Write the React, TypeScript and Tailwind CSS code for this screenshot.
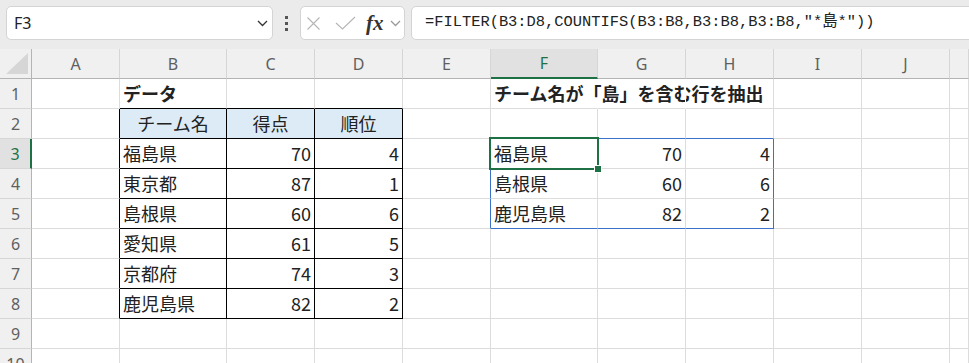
import React from "react";
import clsx from "clsx";

type Cell = { text?: string; align?: "l" | "r" | "c"; bold?: boolean; head?: boolean };

const COLS = ["A", "B", "C", "D", "E", "F", "G", "H", "I", "J", ""];
const ROWS = [1, 2, 3, 4, 5, 6, 7, 8, 9, 10];

const teams: [string, number, number][] = [
  ["福島県", 70, 4],
  ["東京都", 87, 1],
  ["島根県", 60, 6],
  ["愛知県", 61, 5],
  ["京都府", 74, 3],
  ["鹿児島県", 82, 2],
];

// result of =FILTER(...) spilled into F3:H5
const picked = teams.filter(([name]) => name.includes("島"));

const cells: Record<string, Cell> = {
  B1: { text: "データ", bold: true },
  F1: { text: "チーム名が「島」を含む行を抽出", bold: true },
  B2: { text: "チーム名", align: "c", head: true },
  C2: { text: "得点", align: "c", head: true },
  D2: { text: "順位", align: "c", head: true },
};
teams.forEach(([name, score, rank], i) => {
  cells[`B${i + 3}`] = { text: name };
  cells[`C${i + 3}`] = { text: String(score), align: "r" };
  cells[`D${i + 3}`] = { text: String(rank), align: "r" };
});
picked.forEach(([name, score, rank], i) => {
  cells[`F${i + 3}`] = { text: name };
  cells[`G${i + 3}`] = { text: String(score), align: "r" };
  cells[`H${i + 3}`] = { text: String(rank), align: "r" };
});

const inTable = (c: string) => c === "B" || c === "C" || c === "D";
const inSpill = (c: string) => c === "F" || c === "G" || c === "H";

function rightBorder(col: string, row: number) {
  if (row >= 2 && row <= 8 && (col === "A" || inTable(col))) return "border-r-black";
  if (row >= 3 && row <= 5 && (col === "E" || col === "H")) return "border-r-[#3a72c9]";
  if (row === 1 && (col === "F" || col === "G")) return "border-r-white";
  return "border-r-[#dcdcdc]";
}

function bottomBorder(col: string, row: number) {
  if (row <= 8 && inTable(col)) return "border-b-black";
  if ((row === 2 || row === 5) && inSpill(col)) return "border-b-[#3a72c9]";
  return "border-b-[#dcdcdc]";
}

function Chevron({ color }: { color: string }) {
  return (
    <svg width="11" height="7" viewBox="0 0 11 7">
      <polyline points="1,1 5.5,5.5 10,1" fill="none" stroke={color} strokeWidth="1.3" />
    </svg>
  );
}

function FormulaBar() {
  return (
    <div className="flex h-[49px] items-start gap-0 overflow-hidden bg-[#ebebeb] pl-[6px] pt-[6px]">
      {/* name box */}
      <div className="flex h-[34px] w-[267px] shrink-0 items-center justify-between rounded-[5px] border border-[#d4d4d4] bg-white pl-[7px] pr-[4px]">
        <span className="font-['Noto_Sans',sans-serif] text-[16px] text-[#222]">F3</span>
        <Chevron color="#333" />
      </div>
      <div className="flex h-[34px] w-[27px] shrink-0 flex-col items-center justify-center gap-[3px]">
        <span className="size-[3px] bg-[#555]" />
        <span className="size-[3px] bg-[#555]" />
        <span className="size-[3px] bg-[#555]" />
      </div>
      {/* cancel / enter / fx */}
      <div className="flex h-[34px] w-[105px] shrink-0 items-center rounded-[5px] border border-[#d4d4d4] bg-white pl-[6px]">
        <svg width="13" height="13" viewBox="0 0 13 13">
          <path d="M0.5 0.5 L12.5 12.5 M12.5 0.5 L0.5 12.5" stroke="#b5b5b5" strokeWidth="1.1" />
        </svg>
        <svg className="ml-[15px]" width="21" height="14" viewBox="0 0 21 14">
          <polyline points="1,7 7.5,13 20,1" fill="none" stroke="#b5b5b5" strokeWidth="1.1" />
        </svg>
        <span className="ml-[10px] font-['Liberation_Serif',serif] text-[21px] font-bold italic leading-none text-[#333]">
          fx
        </span>
        <span className="ml-[6px] flex">
          <Chevron color="#9a9a9a" />
        </span>
      </div>
      {/* formula */}
      <div className="ml-[6px] flex h-[34px] w-[580px] shrink-0 items-center rounded-[5px] border border-[#d4d4d4] bg-white pl-[13px]">
        <span className="font-['Liberation_Mono','Noto_Sans_CJK_JP',monospace] text-[15.4px] text-[#222]">
          =FILTER(B3:D8,COUNTIFS(B3:B8,B3:B8,B3:B8,"*島*"))
        </span>
      </div>
    </div>
  );
}

function ActiveRing() {
  return (
    <div className="absolute -bottom-[2px] -left-[2px] -right-[2px] -top-[2px] z-10 border-2 border-[#1e7145]">
      <div className="absolute -bottom-[5px] -right-[5px] size-[8px] border border-white bg-[#1e7145]" />
    </div>
  );
}

export default function App() {
  return (
    <div className="h-[363px] w-[969px] overflow-hidden bg-white font-['Noto_Sans_CJK_JP',sans-serif] text-[#222]">
      <FormulaBar />
      <div className="grid grid-cols-[32px_88px_107px_88px_88px_88px_107px_88px_88px_88px_88px_1fr] bg-white">
        {/* column headers */}
        <div className="relative h-[30px] border-b border-r border-b-[#b4b4b4] border-r-[#b4b4b4] bg-[#f0f0f0]">
          <svg className="absolute left-[6px] top-[4px]" width="23" height="22" viewBox="0 0 23 22">
            <polygon points="22,0 22,21 0,21" fill="#d6d6d6" />
          </svg>
        </div>
        {COLS.map((c) => (
          <div
            key={c || "K"}
            className={clsx(
              "flex h-[30px] items-center justify-center border-r font-['Noto_Sans',sans-serif] text-[16px]",
              c === "F"
                ? "border-b-2 border-b-[#1e7145] bg-[#e1e1e1] text-[#1e7145]"
                : "border-b border-b-[#b4b4b4] bg-[#f0f0f0] text-[#5f5f5f]",
              "border-r-[#d6d6d6]"
            )}
          >
            {c}
          </div>
        ))}

        {ROWS.map((r) => (
          <React.Fragment key={r}>
            <div
              className={clsx(
                "flex h-[30px] items-center justify-center border-b border-b-[#d6d6d6] font-['Noto_Sans',sans-serif] text-[16px]",
                r === 3
                  ? "border-r-2 border-r-[#1e7145] bg-[#e1e1e1] text-[#1e7145]"
                  : "border-r border-r-[#b4b4b4] bg-[#f0f0f0] text-[#5f5f5f]"
              )}
            >
              {r}
            </div>
            {COLS.map((c) => {
              const cell = cells[`${c}${r}`] ?? {};
              return (
                <div
                  key={c || "K"}
                  className={clsx(
                    "relative flex h-[30px] items-center whitespace-nowrap border-b border-r text-[18px]",
                    rightBorder(c, r),
                    bottomBorder(c, r),
                    cell.align === "r" && "justify-end pr-[3px]",
                    cell.align === "c" && "justify-center",
                    (!cell.align || cell.align === "l") && "pl-[3px]",
                    cell.head && "bg-[#ddebf7]",
                    cell.bold && "font-bold"
                  )}
                >
                  {cell.text}
                  {c === "F" && r === 3 && <ActiveRing />}
                </div>
              );
            })}
          </React.Fragment>
        ))}
      </div>
    </div>
  );
}
